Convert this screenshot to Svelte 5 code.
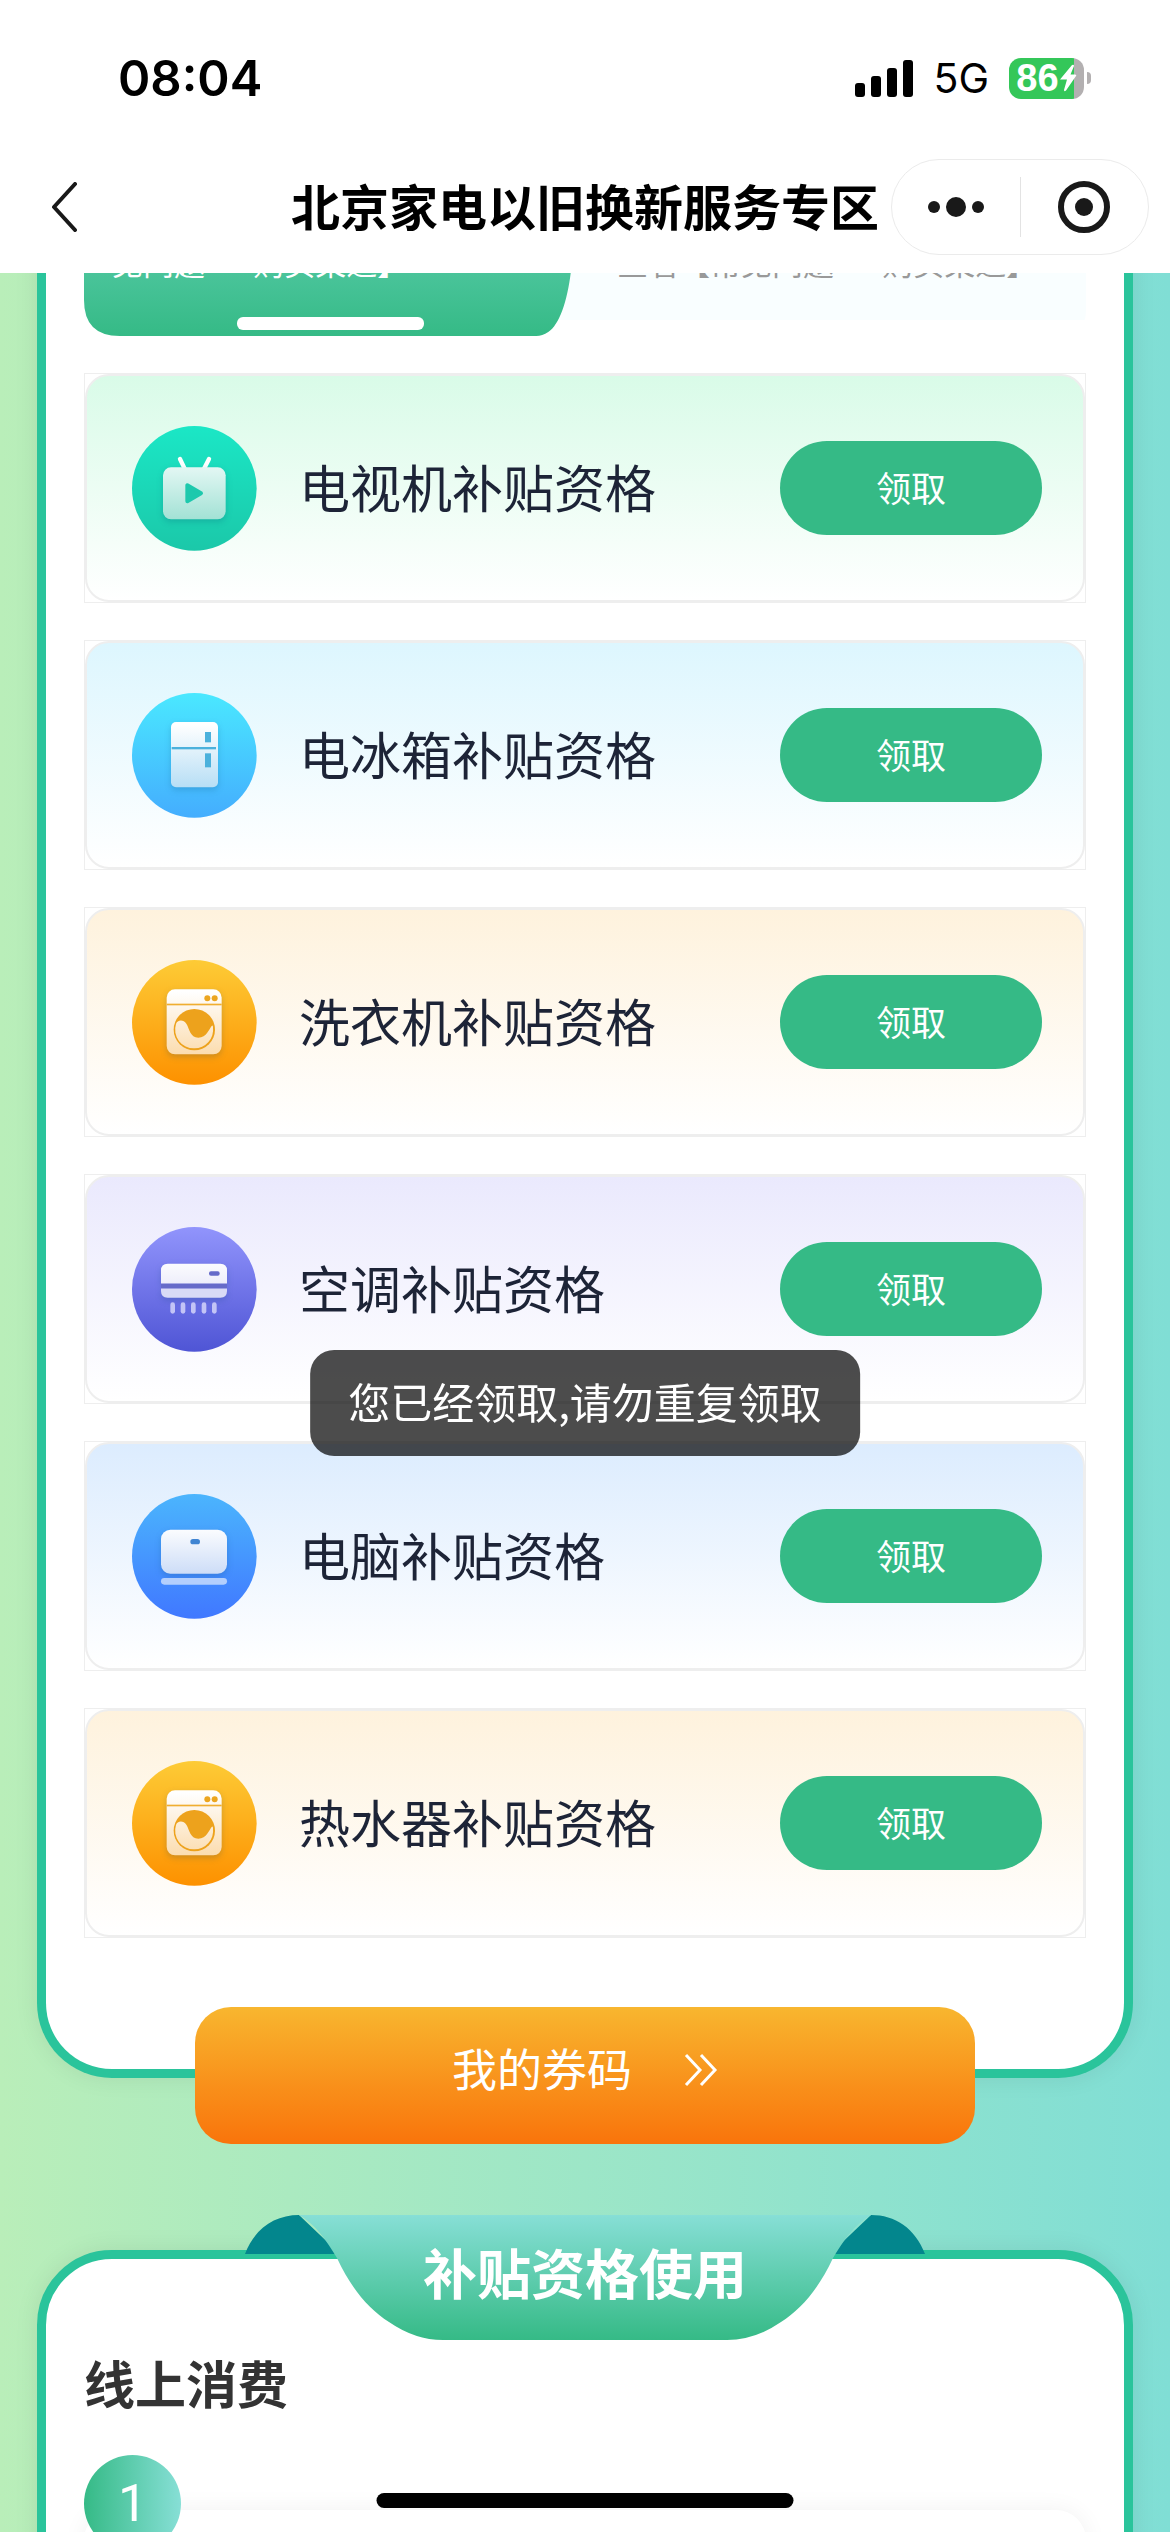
<script>
  let items = $state([
    { id: 'tv', icon: 'tv', name: '电视机补贴资格', tint: '#d9fbe8', disc: ['#1be7c6', '#1bc8a9'], body: ['#effbf9', '#a0e1d4'] },
    { id: 'fridge', icon: 'fridge', name: '电冰箱补贴资格', tint: '#ddf6fe', disc: ['#4ae8ff', '#44adfe'], body: ['#ffffff', '#b6def5'] },
    { id: 'washer', icon: 'washer', name: '洗衣机补贴资格', tint: '#fef2dd', disc: ['#fdcb36', '#fd9100'], body: ['#ffffff', '#fbdcae'] },
    { id: 'aircon', icon: 'aircon', name: '空调补贴资格', tint: '#eae9fd', disc: ['#9194fc', '#4f55d5'], body: ['#ffffff', '#d3d4f4'] },
    { id: 'computer', icon: 'computer', name: '电脑补贴资格', tint: '#dcecfe', disc: ['#4bb5fd', '#4078ff'], body: ['#ffffff', '#bdd2f5'] },
    { id: 'heater', icon: 'washer', name: '热水器补贴资格', tint: '#fef2dd', disc: ['#fdcb36', '#fd9100'], body: ['#ffffff', '#fbdcae'] }
  ]);

  let toast = $state('您已经领取,请勿重复领取');

  function claim() {
    toast = '您已经领取,请勿重复领取';
  }
</script>

<div class="page">
  <header>
    <div class="status-bar">
      <span class="time">08:04</span>
      <div class="status-right">
        <svg class="signal" viewBox="0 0 58 37" aria-hidden="true">
          <rect x="0" y="23" width="10" height="14" rx="3" />
          <rect x="16" y="16" width="10" height="21" rx="3" />
          <rect x="32" y="8" width="10" height="29" rx="3" />
          <rect x="48" y="0" width="10" height="37" rx="3" />
        </svg>
        <span class="network">5G</span>
        <div class="battery">
          <span>86</span>
          <svg viewBox="0 0 18 28" aria-hidden="true">
            <path d="M13 1 L1 15.500 H8 L5 26 Q5 28 7 26.500 L17 12 Q18 10.500 16 10.500 H11.500 L15 2 Q15 0 13 1 Z" fill="#fff" />
          </svg>
        </div>
      </div>
    </div>
    <nav>
      <button class="back" aria-label="返回">
        <svg viewBox="0 0 28 50">
          <path d="M25 2 L4 25 L25 48" fill="none" stroke="#191919" stroke-width="4" stroke-linecap="round" stroke-linejoin="round" />
        </svg>
      </button>
      <h1>北京家电以旧换新服务专区</h1>
      <div class="capsule">
        <button aria-label="更多">
          <svg width="58" height="22" viewBox="0 0 58 22" fill="#191919">
            <circle cx="7" cy="11" r="6" />
            <circle cx="29" cy="11" r="10" />
            <circle cx="51" cy="11" r="6" />
          </svg>
        </button>
        <button aria-label="关闭">
          <svg width="54" height="54" viewBox="0 0 54 54">
            <circle cx="27" cy="27" r="23" fill="none" stroke="#191919" stroke-width="6" />
            <circle cx="27" cy="27" r="9" fill="#191919" />
          </svg>
        </button>
      </div>
    </nav>
  </header>

  <main>
    <section class="card">
      <div class="tabs">
        <button class="tab active">
          <svg class="tab-shape" viewBox="0 0 496 114" preserveAspectRatio="none" aria-hidden="true">
            <defs>
              <linearGradient id="tab-fill" x1="0" y1="0" x2="0" y2="1">
                <stop offset="0" stop-color="#5accaa" />
                <stop offset="1" stop-color="#35ba86" />
              </linearGradient>
            </defs>
            <path d="M0 0 H492 V36 C490 70 481 102 468 110 Q462 114 456 114 H36 Q0 114 0 78 Z" fill="url(#tab-fill)" />
          </svg>
          <span class="tab-text">见问题&gt;&gt;&nbsp; 购买渠道】</span>
          <span class="indicator"></span>
        </button>
        <button class="tab">
          <span class="tab-text">查看【常见问题&gt;&gt;&nbsp; 购买渠道】</span>
        </button>
      </div>

      <ul class="item-list">
        {#each items as item (item.id)}
          <li>
            <div class="item" style:--tint={item.tint}>
              <svg class="item-icon" viewBox="0 0 375 375" aria-hidden="true">
                <defs>
                  <linearGradient id="disc-{item.id}" x1="0" y1="0" x2="0" y2="1">
                    <stop offset="0" stop-color={item.disc[0]} />
                    <stop offset="1" stop-color={item.disc[1]} />
                  </linearGradient>
                  <linearGradient id="body-{item.id}" gradientUnits="userSpaceOnUse" x1="0" y1="95" x2="0" y2="285">
                    <stop offset="0" stop-color={item.body[0]} />
                    <stop offset="1" stop-color={item.body[1]} />
                  </linearGradient>
                </defs>
                <circle cx="187" cy="187" r="187" fill="url(#disc-{item.id})" />
                {#if item.icon === 'tv'}
                  <path d="M144 99 L158 128 M231 99 L216 128" stroke="#fff" stroke-width="13" stroke-linecap="round" />
                  <g class="shade">
                    <rect x="93" y="124" width="188" height="156" rx="24" fill="url(#body-{item.id})" />
                  </g>
                  <path d="M166 178 V226 L207 202 Z" fill="#1dc9ad" stroke="#1dc9ad" stroke-width="12" stroke-linejoin="round" />
                {:else if item.icon === 'fridge'}
                  <g class="shade">
                    <rect x="117" y="87" width="141" height="196" rx="15" fill="url(#body-{item.id})" />
                  </g>
                  <g fill="#4bb1dc">
                    <rect x="119" y="162" width="133" height="7" />
                    <rect x="219" y="117" width="18" height="31" />
                    <rect x="219" y="181" width="18" height="42" />
                  </g>
                {:else if item.icon === 'washer'}
                  <g class="shade">
                    <rect x="104" y="88" width="165" height="195" rx="25" fill="url(#body-{item.id})" />
                  </g>
                  <rect x="104" y="131" width="165" height="5" fill="#f0ae30" />
                  <circle cx="226" cy="115" r="9" fill="#eca620" />
                  <circle cx="248" cy="115" r="9" fill="#eca620" />
                  <circle cx="187" cy="209" r="62" fill="#eda21c" />
                  <path d="M132 192 C135 180 154 177 163 191 C173 207 174 232 199 233 C224 233 232 206 239 198 Q243 194 243 202 A56 56 0 0 1 187 265 A56 56 0 0 1 132 192 Z" fill="url(#body-{item.id})" />
                {:else if item.icon === 'aircon'}
                  <g class="shade">
                    <path d="M87 170 V130 Q87 110 107 110 H265 Q285 110 285 130 V170 Z" fill="url(#body-{item.id})" />
                    <path d="M87 184 H285 V192 Q285 212 265 212 H107 Q87 212 87 192 Z" fill="#d9daf6" />
                  </g>
                  <rect x="87" y="170" width="198" height="14" fill="#666bc9" />
                  <rect x="231" y="133" width="32" height="13" rx="6" fill="#666bc9" />
                  {#each [115, 146, 177, 209, 240] as x}
                    <rect {x} y="226" width="14" height="34" rx="7" fill="#c3c4f6" />
                  {/each}
                {:else}
                  <g class="shade">
                    <rect x="87" y="107" width="198" height="132" rx="28" fill="url(#body-{item.id})" />
                  </g>
                  <rect x="175" y="135" width="29" height="16" rx="8" fill="#3f84d2" />
                  <rect x="87" y="252" width="198" height="20" rx="10" fill="#b3cffd" />
                {/if}
              </svg>
              <span class="item-name">{item.name}</span>
              <button class="claim-btn" onclick={claim}>领取</button>
            </div>
          </li>
        {/each}
      </ul>

      <button class="my-codes">
        <span>我的券码</span>
        <svg viewBox="0 0 34 34" aria-hidden="true">
          <path d="M2 2 L16 17 L2 32 M17 2 L31 17 L17 32" fill="none" stroke="#fff" stroke-width="3" />
        </svg>
      </button>
    </section>

    <section class="card usage">
      <div class="ribbon">
        <svg viewBox="0 0 680 125" aria-hidden="true">
          <defs>
            <linearGradient id="ribbon-fill" x1="0" y1="0" x2="0" y2="1">
              <stop offset="0" stop-color="#87dfd6" />
              <stop offset="1" stop-color="#35ba86" />
            </linearGradient>
          </defs>
          <path d="M0 39 C10 13 30 0 54 0 L95 39 Z M680 39 C670 13 650 0 626 0 L585 39 Z" fill="#03868d" />
          <path d="M54 0 H626 C610 9 598 26 588 43 C573 75 556 94 536 107 Q510 125 482 125 H198 Q170 125 144 107 C124 94 107 75 92 43 C82 26 70 9 54 0 Z" fill="url(#ribbon-fill)" />
        </svg>
        <h2>补贴资格使用</h2>
      </div>
      <h3>线上消费</h3>
      <div class="step">
        <span class="step-number">1</span>
        <div class="step-body"></div>
      </div>
    </section>
  </main>

  {#if toast}
    <div class="toast" role="status">{toast}</div>
  {/if}
  <div class="home-indicator"></div>
</div>

<style>
  :global(body) {
    margin: 0;
    font-family: "Noto Sans CJK SC", "Noto Sans", sans-serif;
  }

  .page {
    display: flex;
    flex-direction: column;
    height: 100vh;
    background: linear-gradient(90deg, #b9eeb9, #80ded5);
  }

  button {
    border: none;
    padding: 0;
    background: none;
    font-family: inherit;
    cursor: pointer;
  }

  svg {
    display: block;
  }

  h1, h2, h3 {
    margin: 0;
    font-weight: 700;
  }

  header {
    flex: none;
    background: #fff;
    color: #000;
  }

  .status-bar {
    display: flex;
    justify-content: space-between;
    align-items: center;
    height: 156px;
    padding: 0 79px 0 118px;
    font-family: Inter, sans-serif;
  }

  .time {
    font-size: 49px;
    font-weight: 600;
  }

  .status-right {
    display: flex;
    align-items: center;
    gap: 20px;
  }

  .signal {
    width: 58px;
    height: 37px;
  }

  .network {
    font-size: 41px;
    font-weight: 400;
  }

  .battery {
    position: relative;
    display: flex;
    align-items: center;
    justify-content: center;
    width: 75px;
    height: 41px;
    margin-right: 7px;
    border-radius: 12px;
    background: linear-gradient(90deg, #34c759 87%, #b3b0b1 87%);
    color: #fff;
    font-family: "Liberation Sans", sans-serif;
    font-size: 38px;
    font-weight: 700;
  }

  .battery svg {
    width: 18px;
    height: 28px;
  }

  .battery::after {
    content: '';
    position: absolute;
    right: -7px;
    width: 4px;
    height: 12px;
    border-radius: 0 4px 4px 0;
    background: #b3b0b1;
  }

  nav {
    display: grid;
    grid-template-columns: 1fr auto 1fr;
    align-items: center;
    height: 102px;
    padding: 0 21px 15px;
  }

  .back {
    justify-self: start;
    padding-left: 29px;
  }

  .back svg {
    width: 28px;
    height: 50px;
  }

  h1 {
    padding-bottom: 4px;
    font-size: 49px;
    line-height: 60px;
    white-space: nowrap;
  }

  .capsule {
    justify-self: end;
    display: flex;
    box-sizing: border-box;
    width: 258px;
    height: 96px;
    border: 1px solid #ebebeb;
    border-radius: 48px;
    align-items: center;
  }

  .capsule button {
    display: flex;
    flex: 1;
    height: 60px;
    align-items: center;
    justify-content: center;
  }

  .capsule button + button {
    border-left: 1px solid #e3e3e3;
  }

  main {
    flex: 1;
    min-height: 0;
    overflow-y: auto;
    scrollbar-width: none;
  }

  .card {
    margin: 0 37px;
    padding: 0 38px;
    border: 9px solid #2ac49b;
    border-radius: 75px;
    background: #fff;
    box-shadow: 0 0 24px rgba(0, 0, 0, 0.08);
  }

  /* the list is scrolled a little way under the header */
  .card:first-child {
    margin-top: -60px;
    border-top: none;
    border-radius: 0 0 75px 75px;
    padding-top: 9px;
  }

  .tabs {
    display: flex;
    align-items: flex-start;
    height: 114px;
    margin-bottom: 37px;
    background: linear-gradient(#f9feff, #f9feff) no-repeat 0 0 / 100% 98px;
    border-radius: 0 0 24px 24px;
  }

  .tab {
    position: relative;
    display: flex;
    flex: 1;
    flex-direction: column;
    height: 98px;
    padding: 20px 0 0 36px;
    color: #999;
    font-size: 31px;
    line-height: 40px;
    text-align: left;
    white-space: nowrap;
  }

  .tab.active {
    height: 114px;
    padding-left: 28px;
    color: #fff;
  }

  .tab-shape {
    position: absolute;
    left: 0;
    top: 0;
    width: 99%;
    height: 100%;
  }

  .tab-text {
    position: relative;
  }

  .indicator {
    position: absolute;
    left: 153px;
    bottom: 6px;
    width: 187px;
    height: 13px;
    border-radius: 6px;
    background: #fff;
  }

  .item-list {
    display: flex;
    flex-direction: column;
    gap: 37px;
    list-style: none;
    margin: 0;
    padding: 0;
  }

  li {
    border: 1px solid #eee;
  }

  .item {
    display: flex;
    align-items: center;
    height: 224px;
    padding: 0 41px 0 45px;
    border: 2px solid #eee;
    border-radius: 24px;
    background: linear-gradient(var(--tint), #fff);
  }

  .item-icon {
    width: 125px;
    height: 125px;
  }

  .shade {
    filter: drop-shadow(0 8px 10px rgba(0, 60, 100, 0.2));
  }

  .item-name {
    flex: 1;
    margin-left: 42px;
    padding-bottom: 4px;
    color: #1d2437;
    font-size: 51px;
    line-height: 60px;
  }

  .claim-btn {
    width: 262px;
    height: 94px;
    padding-bottom: 4px;
    border-radius: 47px;
    background: #35ba86;
    color: #fff;
    font-size: 35px;
  }

  .my-codes {
    position: relative;
    display: flex;
    align-items: center;
    justify-content: center;
    gap: 52px;
    width: 780px;
    height: 137px;
    margin: 69px auto -75px;
    padding-bottom: 12px;
    border-radius: 36px;
    background: linear-gradient(#f8b62f, #f9740b);
    color: #fff;
    font-size: 45px;
  }

  .my-codes span {
    padding-bottom: 4px;
  }

  .my-codes svg {
    width: 34px;
    height: 34px;
  }

  .usage {
    margin-top: 172px;
  }

  .ribbon {
    position: relative;
    display: flex;
    justify-content: center;
    width: 680px;
    height: 125px;
    margin: -44px auto 12px;
  }

  .ribbon svg {
    position: absolute;
    inset: 0;
    width: 100%;
    height: 100%;
  }

  h2 {
    position: relative;
    color: #fff;
    font-size: 54px;
    line-height: 114px;
  }

  h3 {
    color: #333;
    font-size: 51px;
    line-height: 60px;
  }

  .step {
    margin-top: 43px;
  }

  .step-number {
    position: relative;
    display: flex;
    align-items: center;
    justify-content: center;
    width: 97px;
    height: 97px;
    border-radius: 50%;
    background: linear-gradient(90deg, #35ba86, #87dfd6);
    color: #fff;
    font-family: Roboto, sans-serif;
    font-size: 52px;
  }

  .step-body {
    height: 240px;
    margin-top: -42px;
    border-radius: 30px;
    background: #fff;
    box-shadow: 0 0 24px rgba(0, 0, 0, 0.06);
  }

  .toast {
    position: fixed;
    top: 1350px;
    left: 50%;
    transform: translateX(-50%);
    padding: 21px 38px 25px;
    border-radius: 24px;
    background: rgba(0, 0, 0, 0.7);
    color: #fff;
    font-size: 42px;
    line-height: 60px;
    white-space: nowrap;
  }

  .home-indicator {
    position: fixed;
    left: 50%;
    bottom: 24px;
    transform: translateX(-50%);
    width: 417px;
    height: 15px;
    border-radius: 8px;
    background: #000;
  }
</style>
